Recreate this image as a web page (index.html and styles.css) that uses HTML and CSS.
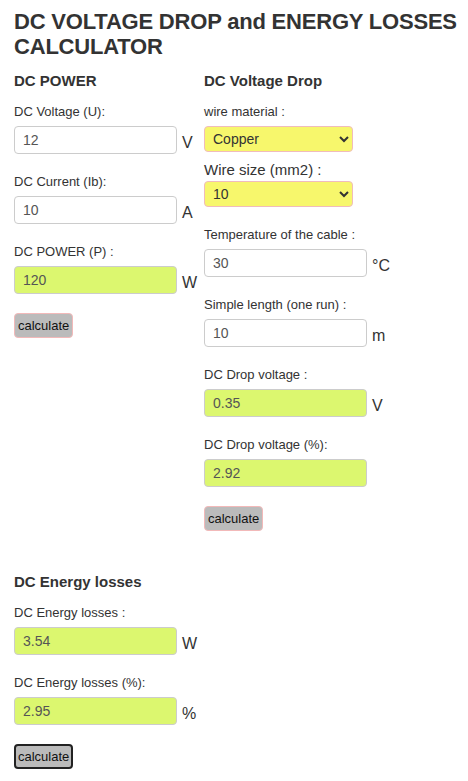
FILE: index.html
```html
<!DOCTYPE html>
<html lang="en">

<head>
    <meta charset="UTF-8">
    <meta name="viewport" content="width=device-width, initial-scale=1.0">
    <title>DC Voltage Drop and Energy Losses Calculator</title>
    <link rel="stylesheet" href="styles.css">
</head>

<body>
    <div class="page">
        <h1>DC VOLTAGE DROP and ENERGY LOSSES CALCULATOR</h1>

        <div class="columns">
            <div class="col">
                <h2>DC POWER</h2>
                <div class="field">
                    <label for="voltage">DC Voltage (U):</label>
                    <div class="row">
                        <input type="text" id="voltage" value="12">
                        <span class="unit">V</span>
                    </div>
                </div>
                <div class="field">
                    <label for="current">DC Current (Ib):</label>
                    <div class="row">
                        <input type="text" id="current" value="10">
                        <span class="unit">A</span>
                    </div>
                </div>
                <div class="field">
                    <label for="power">DC POWER (P) :</label>
                    <div class="row">
                        <input type="text" id="power" class="result" value="120">
                        <span class="unit">W</span>
                    </div>
                </div>
                <button class="calc">calculate</button>
            </div>

            <div class="col">
                <h2>DC Voltage Drop</h2>
                <div class="field tight">
                    <label for="material">wire material :</label>
                    <select id="material" class="pick">
                        <option>Copper</option>
                        <option>Aluminium</option>
                    </select>
                </div>
                <div class="field">
                    <label for="size" class="big">Wire size (mm2) :</label>
                    <select id="size" class="pick">
                        <option>10</option>
                        <option>16</option>
                    </select>
                </div>
                <div class="field">
                    <label for="temp">Temperature of the cable :</label>
                    <div class="row">
                        <input type="text" id="temp" value="30">
                        <span class="unit">°C</span>
                    </div>
                </div>
                <div class="field">
                    <label for="length">Simple length (one run) :</label>
                    <div class="row">
                        <input type="text" id="length" value="10">
                        <span class="unit">m</span>
                    </div>
                </div>
                <div class="field">
                    <label for="drop">DC Drop voltage :</label>
                    <div class="row">
                        <input type="text" id="drop" class="result" value="0.35">
                        <span class="unit">V</span>
                    </div>
                </div>
                <div class="field">
                    <label for="dropPct">DC Drop voltage (%):</label>
                    <div class="row">
                        <input type="text" id="dropPct" class="result" value="2.92">
                    </div>
                </div>
                <button class="calc">calculate</button>
            </div>
        </div>

        <div class="losses">
            <h2>DC Energy losses</h2>
            <div class="field">
                <label for="loss">DC Energy losses :</label>
                <div class="row">
                    <input type="text" id="loss" class="result" value="3.54">
                    <span class="unit">W</span>
                </div>
            </div>
            <div class="field">
                <label for="lossPct">DC Energy losses (%):</label>
                <div class="row">
                    <input type="text" id="lossPct" class="result" value="2.95">
                    <span class="unit">%</span>
                </div>
            </div>
            <button class="calc focused">calculate</button>
        </div>
    </div>
</body>

</html>
```

FILE: styles.css
```css
body {
    margin: 0;
    font-family: Arial, "Liberation Sans", sans-serif;
    color: #333;
    background-color: #fff;
}

.page {
    padding: 9px 4px 9px 14px;
}

h1 {
    margin: 0;
    font-size: 22px;
    line-height: 25px;
    font-weight: bold;
    letter-spacing: -0.2px;
}

h2 {
    margin: 0 0 15px;
    font-size: 15px;
    line-height: 17px;
    font-weight: bold;
}

.columns {
    display: grid;
    grid-template-columns: 190px 1fr;
    margin-top: 13px;
}

label {
    display: block;
    font-size: 13px;
    line-height: 16px;
    margin-bottom: 6px;
}

label.big {
    font-size: 15px;
    line-height: 18px;
    margin-bottom: 2px;
}

.field {
    margin-bottom: 20px;
}

.field.tight {
    margin-bottom: 9px;
}

.row {
    display: flex;
}

.row input {
    box-sizing: border-box;
    width: 163px;
    height: 28px;
    padding: 0 8px;
    font-family: Arial, "Liberation Sans", sans-serif;
    font-size: 14px;
    color: #555;
    background-color: #fff;
    border: 1px solid #ccc;
    border-radius: 4px;
    outline: none;
}

.row input.result {
    background-color: #dcf76f;
}

.unit {
    align-self: flex-end;
    margin-left: 5px;
    padding-bottom: 2px;
    font-size: 16px;
    line-height: 18px;
}

.pick {
    box-sizing: border-box;
    display: block;
    width: 149px;
    height: 26px;
    padding: 0 4px;
    font-family: Arial, "Liberation Sans", sans-serif;
    font-size: 14px;
    color: #333;
    background-color: #f7f76c;
    border: 1px solid #f0bcbc;
    border-radius: 4px;
}

.calc {
    display: block;
    padding: 4px 3px;
    font-family: Arial, "Liberation Sans", sans-serif;
    font-size: 13px;
    line-height: 15px;
    color: #111;
    background-color: #bbb;
    border: 1px solid #f2b9b9;
    border-radius: 4px;
    margin-top: -1px;
}

.calc.focused {
    border: 2px solid #222;
    padding: 3px 2px;
}

.losses {
    margin-top: 42px;
}
```
